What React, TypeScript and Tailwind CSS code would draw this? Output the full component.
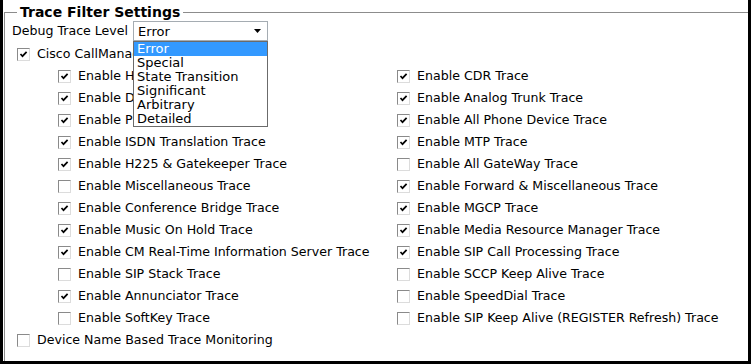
import React from "react";

type Item = { label: string; checked: boolean };

const leftItems: Item[] = [
  { label: "Enable H245 Message Trace", checked: true },
  { label: "Enable DT-24+/DE-30+ Trace", checked: true },
  { label: "Enable PRI Trace", checked: true },
  { label: "Enable ISDN Translation Trace", checked: true },
  { label: "Enable H225 & Gatekeeper Trace", checked: true },
  { label: "Enable Miscellaneous Trace", checked: false },
  { label: "Enable Conference Bridge Trace", checked: true },
  { label: "Enable Music On Hold Trace", checked: true },
  { label: "Enable CM Real-Time Information Server Trace", checked: true },
  { label: "Enable SIP Stack Trace", checked: false },
  { label: "Enable Annunciator Trace", checked: true },
  { label: "Enable SoftKey Trace", checked: false },
];

const rightItems: Item[] = [
  { label: "Enable CDR Trace", checked: true },
  { label: "Enable Analog Trunk Trace", checked: true },
  { label: "Enable All Phone Device Trace", checked: true },
  { label: "Enable MTP Trace", checked: true },
  { label: "Enable All GateWay Trace", checked: false },
  { label: "Enable Forward & Miscellaneous Trace", checked: true },
  { label: "Enable MGCP Trace", checked: true },
  { label: "Enable Media Resource Manager Trace", checked: true },
  { label: "Enable SIP Call Processing Trace", checked: true },
  { label: "Enable SCCP Keep Alive Trace", checked: false },
  { label: "Enable SpeedDial Trace", checked: false },
  { label: "Enable SIP Keep Alive (REGISTER Refresh) Trace", checked: false },
];

const levels = ["Error", "Special", "State Transition", "Significant", "Arbitrary", "Detailed"];

const Box = ({ checked }: { checked: boolean }) => (
  <span className="w-[13px] h-[13px] shrink-0 flex items-center justify-center bg-white border border-t-[#8a8a8a] border-l-[#8a8a8a] border-b-[#dcdcdc] border-r-[#dcdcdc]">
    {checked && (
      <svg width="9" height="9" viewBox="0 0 9 9">
        <path d="M1.5 4 L3.5 6.2 L7.6 1.8" fill="none" stroke="#000" strokeWidth="1.7" />
      </svg>
    )}
  </span>
);

const Row = ({ item }: { item: Item }) => (
  <div className="h-[22px] flex items-center gap-[7px] whitespace-nowrap">
    <Box checked={item.checked} />
    <span>{item.label}</span>
  </div>
);

export default function App() {
  return (
    <div
      className="w-[751px] h-[364px] bg-white border-l-[3px] border-r-[3px] border-b-[3px] border-black overflow-hidden text-[12.6px] text-black leading-none"
      style={{ fontFamily: '"DejaVu Sans", Verdana, sans-serif' }}
    >
      <fieldset className="ml-[1px] mt-[4px] border-l border-t border-[#8c8c8c] pl-[7px] h-[400px]">
        <legend className="ml-[5px] px-[3px] font-bold text-[14px] leading-[16px]">Trace Filter Settings</legend>

        <div className="h-[22px] flex items-center gap-[5px]">
          <span>Debug Trace Level</span>
          <div className="relative">
            <div className="w-[135px] h-[20px] border border-[#a5acb2] flex items-center justify-between pl-[4px] pr-[6px] text-[13px]">
              <span>Error</span>
              <svg width="7" height="4" viewBox="0 0 7 4">
                <path d="M0 0 H7 L3.5 4 Z" fill="#000" />
              </svg>
            </div>
            <ul className="absolute left-0 top-[20px] w-[135px] bg-white border border-[#6b6b6b] z-10 text-[13px]">
              {levels.map((l, i) => (
                <li
                  key={l}
                  className={
                    i === 0
                      ? "h-[14px] leading-[14px] pl-[3px] bg-[#3399ff] text-white"
                      : "h-[14px] leading-[14px] pl-[3px]"
                  }
                >
                  {l}
                </li>
              ))}
            </ul>
          </div>
        </div>

        <div className="ml-[5px] mt-[1px]">
          <Row item={{ label: "Cisco CallManager Trace", checked: true }} />
        </div>

        <div className="flex">
          <div className="ml-[46px] w-[339px]">
            {leftItems.map((it) => (
              <Row key={it.label} item={it} />
            ))}
          </div>
          <div>
            {rightItems.map((it) => (
              <Row key={it.label} item={it} />
            ))}
          </div>
        </div>

        <div className="ml-[5px]">
          <Row item={{ label: "Device Name Based Trace Monitoring", checked: false }} />
        </div>
      </fieldset>
    </div>
  );
}
